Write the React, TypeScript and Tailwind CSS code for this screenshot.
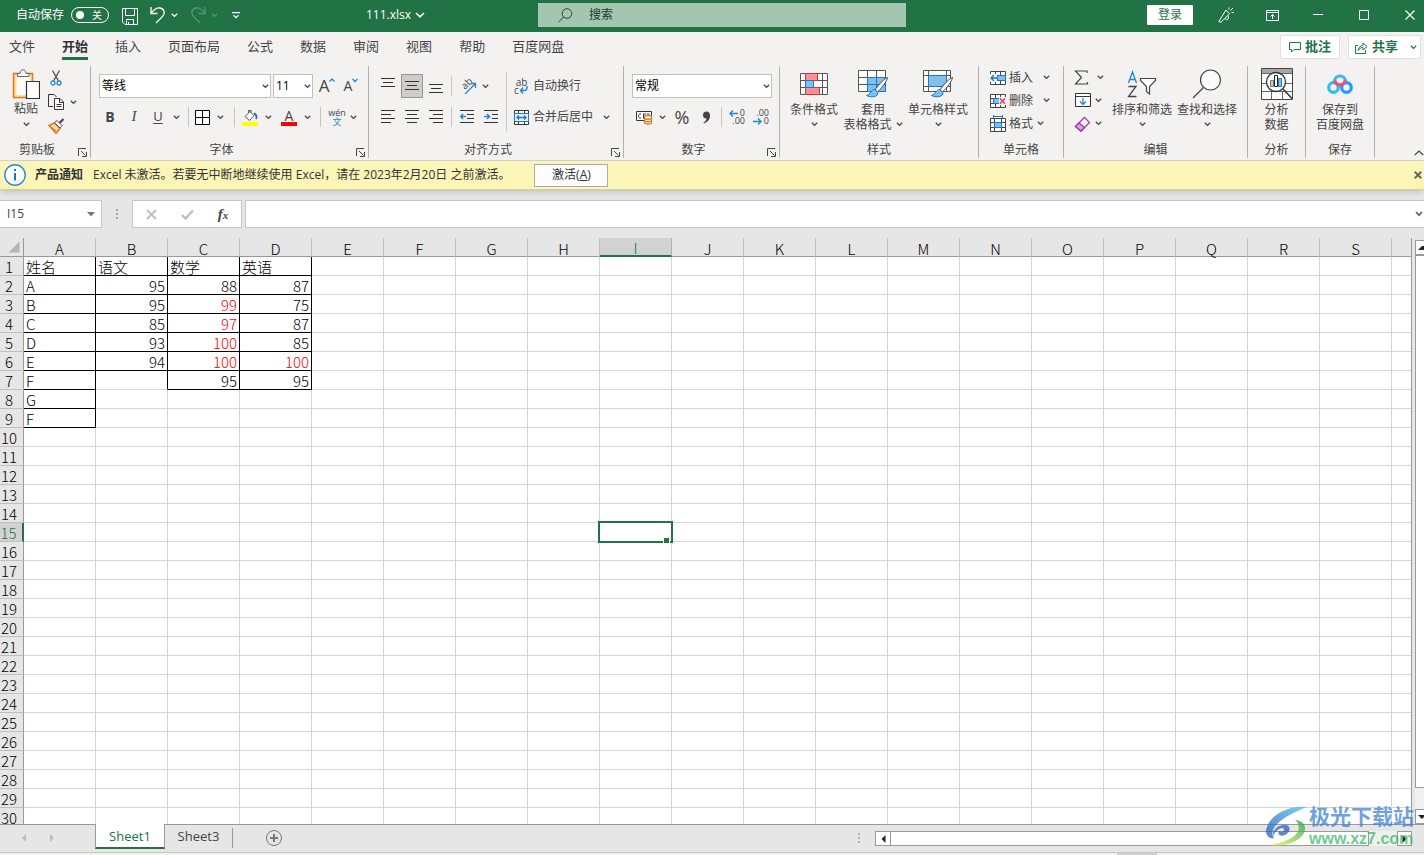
import type { ReactNode } from "react";

const COLUMNS = "ABCDEFGHIJKLMNOPQRS".split("");
const ROW_COUNT = 30;
const SELECTED = { column: "I", row: 15 };

const RIBBON_TABS = ["文件", "开始", "插入", "页面布局", "公式", "数据", "审阅", "视图", "帮助", "百度网盘"];

type Cell = { value?: string; red?: boolean };

const SHEET: Record<number, Record<string, Cell>> = {
  1: { A: { value: "姓名" }, B: { value: "语文" }, C: { value: "数学" }, D: { value: "英语" } },
  2: { A: { value: "A" }, B: { value: "95" }, C: { value: "88" }, D: { value: "87" } },
  3: { A: { value: "B" }, B: { value: "95" }, C: { value: "99", red: true }, D: { value: "75" } },
  4: { A: { value: "C" }, B: { value: "85" }, C: { value: "97", red: true }, D: { value: "87" } },
  5: { A: { value: "D" }, B: { value: "93" }, C: { value: "100", red: true }, D: { value: "85" } },
  6: { A: { value: "E" }, B: { value: "94" }, C: { value: "100", red: true }, D: { value: "100", red: true } },
  7: { A: { value: "F" }, C: { value: "95" }, D: { value: "95" } },
  8: { A: { value: "G" } },
  9: { A: { value: "F" } },
};

/* ---------- shared pieces ---------- */

function Svg({ w, h, className = "", children }: { w: number; h: number; className?: string; children: ReactNode }) {
  return (
    <svg width={w} height={h} viewBox={`0 0 ${w} ${h}`} fill="none" stroke="currentColor" className={`shrink-0 ${className}`} aria-hidden="true">
      {children}
    </svg>
  );
}

function Chevron({ className = "" }: { className?: string }) {
  return (
    <Svg w={7} h={5} className={className}>
      <path d="M0.8 0.8 3.5 3.4 6.2 0.8" strokeWidth="1.3" />
    </Svg>
  );
}

function ChevronButton({ label }: { label: string }) {
  return (
    <button aria-label={label} className="flex h-6 w-3 shrink-0 items-center justify-center">
      <Chevron />
    </button>
  );
}

function IconButton({ label, className = "w-6", children }: { label: string; className?: string; children: ReactNode }) {
  return (
    <button aria-label={label} className={`flex h-6 shrink-0 items-center justify-center ${className}`}>
      {children}
    </button>
  );
}

function Divider({ className = "h-5" }: { className?: string }) {
  return <div className={`w-px shrink-0 bg-[#c8c6c4] ${className}`} />;
}

function Picker({ label, value, className }: { label: string; value: string; className: string }) {
  return (
    <div className={`relative shrink-0 ${className}`}>
      <select aria-label={label} defaultValue={value} className="h-6 w-full appearance-none border border-[#c3c1bf] bg-white pl-0.5 text-xs text-black">
        <option>{value}</option>
      </select>
      <Chevron className="pointer-events-none absolute top-2.5 right-0.5" />
    </div>
  );
}

function Group({ label, className, launcher, children }: { label: string; className: string; launcher?: boolean; children: ReactNode }) {
  return (
    <section aria-label={label} className={`flex h-[92px] shrink-0 flex-col border-r border-[#b3b0ad] ${className}`}>
      <div className="flex-1">{children}</div>
      <div className="flex h-4 items-center">
        <span className="flex-1 text-center text-xs leading-4">{label}</span>
        {launcher && (
          <button aria-label={`${label}设置`} className="flex w-4 justify-end pt-1 pr-[3px]">
            <Svg w={9} h={9}>
              <path d="M0.5 8V0.5H8M3 3l4.5 4.5M8.5 4v4.5H4" />
            </Svg>
          </button>
        )}
      </div>
    </section>
  );
}

function BigButton({ icon, lines, chevron, className }: { icon: ReactNode; lines: string[]; chevron?: boolean; className: string }) {
  return (
    <button className={`flex shrink-0 flex-col items-center text-xs leading-[15px] ${className}`}>
      <span className="mb-0.5 flex h-8 items-center justify-center">{icon}</span>
      <span className="whitespace-nowrap">{lines[0]}</span>
      <span className="flex h-[15px] items-center gap-1 whitespace-nowrap">
        {lines[1]}
        {chevron && <Chevron />}
      </span>
    </button>
  );
}

function AlignIcon({ lines }: { lines: [number, number, number][] }) {
  return (
    <Svg w={14} h={16}>
      {lines.map(([x, y, w]) => (
        <path key={y} d={`M${x} ${y + 0.5}h${w}`} stroke="#333" />
      ))}
    </Svg>
  );
}

/* ---------- title bar ---------- */

function TitleBar() {
  return (
    <header className="grid h-8 shrink-0 grid-cols-[538fr_368fr_518fr] bg-[#217346] text-xs text-white">
      <div className="flex items-center pr-[113px] pb-0.5 pl-4">
        <label className="flex items-center gap-[7px]">
          自动保存
          <input type="checkbox" className="sr-only" />
          <span className="flex h-4 w-[38px] items-center justify-between rounded-full border border-white pr-1.5 pl-1">
            <span className="size-2 rounded-full bg-white" />
            <span className="text-[10px] leading-3">关</span>
          </span>
        </label>
        <IconButton label="保存" className="mt-0.5 ml-[11px] w-5">
          <Svg w={16} h={17}>
            <path d="M0.5 0.5H15.5V16.5H3L0.5 14V0.5ZM3.5 0.5V7.5H12.5V0.5M4.5 16.5V11.5H11.5V16.5M6.5 14v2" />
          </Svg>
        </IconButton>
        <IconButton label="撤消" className="ml-2 w-5">
          <Svg w={16} h={18}>
            <path d="M1 1V7.5H7.5M1.2 7.2C4 3.5 7 1.5 10 2 14.5 2.8 15.5 7.5 12.5 10.5L6 17" strokeWidth="1.3" />
          </Svg>
        </IconButton>
        <ChevronButton label="撤消列表" />
        <IconButton label="恢复" className="ml-2 w-5 text-[#559674]">
          <Svg w={16} h={18}>
            <path d="M15 1V7.5H8.5M14.8 7.2C12 3.5 9 1.5 6 2 1.5 2.8 0.5 7.5 3.5 10.5L10 17" strokeWidth="1.3" />
          </Svg>
        </IconButton>
        <span className="text-[#559674]">
          <ChevronButton label="恢复列表" />
        </span>
        <IconButton label="自定义快速访问工具栏" className="ml-1.5 w-5">
          <Svg w={8} h={7}>
            <path d="M0 0.7H8M1.5 3.2 4 5.7 6.5 3.2" strokeWidth="1.3" />
          </Svg>
        </IconButton>
        <button className="ml-auto flex items-center gap-1">
          <span>111.xlsx</span>
          <Svg w={10} h={6}>
            <path d="M1 1 5 4.8 9 1" strokeWidth="1.6" />
          </Svg>
        </button>
      </div>
      <label className="mt-[3px] flex h-6 items-center gap-4 bg-[#a3c6b1] pl-5 text-[#1e4e33]">
        <Svg w={15} h={15}>
          <circle cx="9" cy="5.5" r="4.8" />
          <path d="M5.5 9 0.5 14.2" />
        </Svg>
        <input aria-label="搜索" placeholder="搜索" className="w-full bg-transparent text-xs outline-none placeholder:text-[#173d28]" />
      </label>
      <div className="flex items-center justify-end pb-0.5">
        <button className="mr-[25px] h-5 w-[46px] rounded-[1px] bg-white text-xs text-[#217346]">登录</button>
        <IconButton label="即将推出的功能" className="w-4">
          <Svg w={16} h={16}>
            <path d="M0.8 14.5 8 3 11.5 6.8 3 15.2 0.8 14.5ZM7 11.5 8.5 13 10.5 11.5 10 8.5M11 2.5V0.5M12.5 3.5 15 1M13.5 5.5H15.8" />
          </Svg>
        </IconButton>
        <IconButton label="功能区显示选项" className="ml-[30px] w-4">
          <Svg w={13} h={11}>
            <path d="M0.5 0.5H12.5V10.5H0.5ZM0.5 2.5H12.5M6.5 9V4.5M4.5 6.5 6.5 4.5 8.5 6.5" />
          </Svg>
        </IconButton>
        <IconButton label="最小化" className="ml-[30px] w-4">
          <Svg w={10} h={10}>
            <path d="M0 4.5H10" />
          </Svg>
        </IconButton>
        <IconButton label="最大化" className="ml-[30px] w-4">
          <Svg w={10} h={10}>
            <path d="M0.5 0.5H9.5V9.5H0.5Z" />
          </Svg>
        </IconButton>
        <IconButton label="关闭" className="mr-1.5 ml-[30px] w-4">
          <Svg w={10} h={10}>
            <path d="M0.5 0.5 9.5 9.5M9.5 0.5 0.5 9.5" strokeWidth="1.2" />
          </Svg>
        </IconButton>
      </div>
    </header>
  );
}

function TabBar() {
  return (
    <nav className="flex h-[30px] shrink-0 items-center bg-[#f3f2f1] pr-[3px] pl-[9px]">
      <div className="flex flex-1 gap-[27px]">
        {RIBBON_TABS.map((tab) => (
          <button
            key={tab}
            className={`h-[26px] border-b-[3px] text-[13px] leading-5 whitespace-nowrap ${
              tab === "开始" ? "border-[#217346] font-bold text-[#333]" : "border-transparent"
            }`}
          >
            {tab}
          </button>
        ))}
      </div>
      <button className="mr-2 flex h-6 w-[60px] items-center justify-center gap-1 rounded-xs border border-[#e1dfdd] bg-white text-[13px] font-bold text-[#217346]">
        <Svg w={12} h={11}>
          <path d="M0.5 0.5H11.5V7.5H5L2.5 10V7.5H0.5Z" />
        </Svg>
        批注
      </button>
      <button className="flex h-6 w-[73px] items-center gap-1 rounded-xs border border-[#e1dfdd] bg-white pl-1.5 text-[13px] font-bold text-[#217346]">
        <Svg w={13} h={13}>
          <path d="M3 4.5H0.5V12.5H10.5V9M3 9.5C3.5 6 6 4.5 8 4.5V2L12 5.5 8 9V6.5C6 6.5 4.5 7.5 3 9.5Z" />
        </Svg>
        共享
        <Chevron className="ml-2" />
      </button>
    </nav>
  );
}

/* ---------- ribbon icons ---------- */

function PasteIcon() {
  return (
    <Svg w={28} h={31}>
      <path d="M1.5 4.5H20.5V28.5H1.5Z" fill="#fbdf9b" stroke="#e0771c" strokeWidth="1.5" />
      <path d="M4.5 6.5H18V26H4.5Z" fill="#fcfcfc" stroke="none" />
      <path d="M5.5 7.5V4.5H8C8 2 9.5 0.8 11 0.8S14 2 14 4.5H17V7.5Z" fill="#fff" stroke="#666" />
      <path d="M14.5 12.5H27.5V29.5H14.5Z" fill="#fff" stroke="#333" strokeWidth="1.2" />
    </Svg>
  );
}

function CutIcon() {
  return (
    <Svg w={12} h={16}>
      <path d="M2.5 0.5 8.5 11M9.5 0.5 3.5 11" stroke="#444" strokeWidth="1.2" />
      <circle cx="3" cy="13" r="2" stroke="#2a8dd4" strokeWidth="1.3" />
      <circle cx="9" cy="13" r="2" stroke="#2a8dd4" strokeWidth="1.3" />
    </Svg>
  );
}

function CopyIcon() {
  return (
    <Svg w={16} h={17}>
      <path d="M5 12.5H0.5V0.5H6L8.5 3" stroke="#333" />
      <path d="M6.5 4.5H12L15.5 8V15.5H6.5ZM11.5 4.5V8.5H15.5M8.5 10.5H13.5M8.5 12.5H13.5" fill="#fff" stroke="#333" />
    </Svg>
  );
}

function BrushIcon() {
  return (
    <Svg w={17} h={16}>
      <path d="M1 7.5 6.5 5 12 10.5 8 15.2Z" fill="#fbd9a8" stroke="#e0771c" strokeWidth="1.5" />
      <path d="M3 9.5 8 13" stroke="#e0771c" strokeWidth="1.3" />
      <path d="M6.5 4.5 9 2.5 14 7.5 12 10Z" fill="#fff" stroke="#555" />
      <path d="M11.5 5 15.5 1" stroke="#444" strokeWidth="2.2" />
    </Svg>
  );
}

function TableGlyph() {
  return (
    <path d="M0.5 0.5H27.5V21.5H0.5ZM0.5 7.5H27.5M0.5 14.5H27.5M9.5 0.5V21.5M18.5 0.5V21.5" fill="#fff" stroke="#555" />
  );
}

function StyleBrush() {
  return (
    <>
      <path d="M29.5 7.5C27 8 20 15 17 20L19.5 22C24 18 29 11 29.5 7.5Z" fill="#fff" stroke="#444" />
      <path d="M16.5 19.5C13 19.5 13 24 8.5 25.5 13 28 20.5 27 20 22.5Z" fill="#83beec" stroke="#1979ca" />
    </>
  );
}

function ConditionalIcon() {
  return (
    <Svg w={28} h={24}>
      <path d="M0.5 1.5H27.5V22.5H0.5ZM0.5 8.5H27.5M0.5 15.5H27.5M5.5 1.5V22.5M22.5 1.5V22.5" fill="#fff" stroke="#555" />
      <path d="M5.5 1.5H17.5V8.5H5.5ZM5.5 15.5H19.5V22.5H5.5Z" fill="#ff8f95" stroke="#d6343c" />
      <path d="M5.5 8.5H13.5V15.5H5.5Z" fill="#83beec" stroke="#1979ca" />
    </Svg>
  );
}

function TableStyleIcon() {
  return (
    <Svg w={30} h={28}>
      <TableGlyph />
      <path d="M9.5 7.5H27.5V21.5H9.5ZM9.5 14.5H27.5M18.5 7.5V21.5" fill="#83beec" stroke="#1979ca" />
      <StyleBrush />
    </Svg>
  );
}

function CellStyleIcon() {
  return (
    <Svg w={30} h={28}>
      <path d="M0.5 0.5H27.5V21.5H0.5ZM0.5 5.5H27.5M0.5 16.5H27.5M5.5 0.5V21.5M23.5 0.5V21.5" fill="#fff" stroke="#555" />
      <path d="M5.5 5.5H23.5V16.5H5.5Z" fill="#83beec" stroke="#1979ca" />
      <StyleBrush />
    </Svg>
  );
}

function SmallGrid() {
  return <path d="M0.5 0.5H15.5V13.5H0.5ZM0.5 4.5H15.5M0.5 9.5H15.5M5.5 0.5V13.5M10.5 0.5V13.5" fill="#fff" stroke="#444" />;
}

function InsertCellIcon() {
  return (
    <Svg w={16} h={14}>
      <SmallGrid />
      <path d="M7.5 4.5H15.5V9.5H7.5Z" fill="#83beec" stroke="#1979ca" />
      <path d="M0 3H7V11H0Z" fill="#f3f2f1" stroke="none" />
      <path d="M8 7H1M4 4 1 7 4 10" stroke="#1979ca" strokeWidth="1.3" />
    </Svg>
  );
}

function DeleteCellIcon() {
  return (
    <Svg w={16} h={14}>
      <SmallGrid />
      <path d="M3.5 4.5H9.5V9.5H3.5Z" fill="#83beec" stroke="#1979ca" />
      <path d="M9 3H16V11H9Z" fill="#f3f2f1" stroke="none" />
      <path d="M10 4.500 15 9.800M15 4.500 10 9.800" stroke="#e8404a" strokeWidth="1.5" />
    </Svg>
  );
}

function FormatCellIcon() {
  return (
    <Svg w={16} h={17}>
      <path d="M0.5 3.5H15.5V16.5H0.5ZM0.5 7.5H15.5M0.5 12.5H15.5M4.5 3.5V16.5M11.5 3.5V16.5" fill="#fff" stroke="#444" />
      <path d="M4.5 7.5H11.5V12.5H4.5Z" fill="#83beec" stroke="#1979ca" />
      <path d="M3.5 1.5H12.5M3.5 0V3M12.5 0V3" stroke="#1979ca" />
    </Svg>
  );
}

function SortFilterIcon() {
  return (
    <Svg w={30} h={28}>
      <path d="M1.5 13 5.5 2 9.5 13M3 9.5H8" stroke="#1f88d2" strokeWidth="1.3" />
      <path d="M1.5 16.5H9L1.5 26.5H9.5" stroke="#444" strokeWidth="1.3" />
      <path d="M13.5 8.5H28.5V10.5L22.5 16.5V24L19.5 21.5V16.5L13.5 10.5Z" fill="#fff" stroke="#444" strokeWidth="1.2" />
    </Svg>
  );
}

function FindIcon() {
  return (
    <Svg w={30} h={30}>
      <circle cx="18.5" cy="11" r="10" fill="#fafafa" stroke="#444" strokeWidth="1.2" />
      <path d="M11.5 18.5 1 29" stroke="#444" strokeWidth="1.3" />
    </Svg>
  );
}

function AnalyzeIcon() {
  return (
    <Svg w={32} h={32}>
      <path d="M0.5 0.5H31.5V31.5H0.5Z" fill="#fff" stroke="#444" />
      <path d="M1 1H31V5H1Z" fill="#a8a6a4" stroke="none" />
      <path d="M1 5.5H31M1 15.5H31M1 23.5H31M10.5 23.5V31M21.5 23.5V31" stroke="#666" />
      <circle cx="15" cy="14" r="9.5" fill="#fff" stroke="#333" strokeWidth="1.3" />
      <path d="M22 21 31 30.5" stroke="#333" strokeWidth="1.5" />
      <path d="M9.5 12.5H12.5V18.5H9.5Z" fill="#c8c6c4" stroke="#777" />
      <path d="M13.5 7.5H16.5V18.5H13.5Z" fill="#fff" stroke="#222" />
      <path d="M17.5 10.5H20.5V18.5H17.5Z" fill="#83beec" stroke="#1979ca" />
    </Svg>
  );
}

function NetdiskIcon() {
  return (
    <Svg w={26} h={20}>
      <circle cx="6.5" cy="13.5" r="4.8" stroke="#2fb9f6" strokeWidth="3.2" />
      <circle cx="19.5" cy="13.5" r="4.8" stroke="#1c9cff" strokeWidth="3.2" />
      <path d="M7.5 7.5A5.5 5.5 0 0 1 18.5 7.5" stroke="#3cb4f8" strokeWidth="3.2" />
      <path d="M7.8 6.5A5.3 5.3 0 0 0 18.2 6.5" stroke="#f2506a" strokeWidth="3.2" />
    </Svg>
  );
}

/* ---------- ribbon groups ---------- */

function ClipboardGroup() {
  return (
    <Group label="剪贴板" className="w-[91px]" launcher>
      <div className="flex pl-2.5">
        <button className="flex w-8 flex-col items-center pt-[3px] text-xs">
          <PasteIcon />
          <span className="text-xs leading-[18px] whitespace-nowrap">粘贴</span>
          <Chevron className="mt-1" />
        </button>
        <div className="flex flex-col pl-1.5">
          <IconButton label="剪切" className="w-4">
            <CutIcon />
          </IconButton>
          <div className="flex items-center">
            <IconButton label="复制" className="w-4">
              <CopyIcon />
            </IconButton>
            <span className="ml-[3px]">
              <ChevronButton label="复制选项" />
            </span>
          </div>
          <IconButton label="格式刷" className="w-4">
            <BrushIcon />
          </IconButton>
        </div>
      </div>
    </Group>
  );
}

function FontGroup() {
  return (
    <Group label="字体" className="w-[278px]" launcher>
      <div className="flex flex-col gap-[7px] pt-2">
        <div className="flex items-center pl-2">
          <Picker label="字体" value="等线" className="mr-0.5 w-[172px]" />
          <Picker label="字号" value="11" className="mr-0.5 w-10" />
          <IconButton label="增大字号">
            <span className="text-[17px]">A</span>
            <Svg w={6} h={18}>
              <path d="M0.5 4.5 3 2 5.5 4.5" stroke="#1f88d2" strokeWidth="1.3" />
            </Svg>
          </IconButton>
          <IconButton label="减小字号">
            <span className="text-sm">A</span>
            <Svg w={6} h={18}>
              <path d="M0.5 2 3 4.5 5.5 2" stroke="#1f88d2" strokeWidth="1.3" />
            </Svg>
          </IconButton>
        </div>
        <div className="flex items-center pl-[7px]">
          <IconButton label="加粗">
            <b className="text-sm">B</b>
          </IconButton>
          <IconButton label="倾斜">
            <i className="font-['Liberation_Serif',serif] text-[15px]">I</i>
          </IconButton>
          <IconButton label="下划线">
            <u className="text-[13px] underline-offset-2">U</u>
          </IconButton>
          <ChevronButton label="下划线样式" />
          <Divider className="mx-1.5 h-5" />
          <IconButton label="边框" className="mr-1 w-[15px]">
            <Svg w={15} h={15}>
              <path d="M0.5 0.5H14.5V14.5H0.5ZM7.5 0.5V14.5M0.5 7.5H14.5" fill="#fff" stroke="#000" />
            </Svg>
          </IconButton>
          <ChevronButton label="边框样式" />
          <Divider className="mr-[7px] ml-2 h-5" />
          <IconButton label="填充颜色" className="mr-1 w-4">
            <Svg w={16} h={17}>
              <path d="M3 7.5 8 2.5 12 6.5 7.5 11.5ZM6.5 4V1.5H9V3.5" fill="#fff" stroke="#555" />
              <path d="M12 4.5C14.5 5 15 8 14 10" stroke="#1f6fb0" strokeWidth="1.8" />
              <path d="M0 13H16V17H0Z" fill="#ff0" stroke="none" />
            </Svg>
          </IconButton>
          <ChevronButton label="填充颜色列表" />
          <IconButton label="字体颜色" className="mr-1 ml-[7px] w-4 flex-col">
            <span className="text-sm leading-[13px]">A</span>
            <span className="h-1 w-4 bg-[#f00]" />
          </IconButton>
          <ChevronButton label="字体颜色列表" />
          <Divider className="mr-1.5 ml-[7px] h-5" />
          <IconButton label="拼音指南" className="w-5 flex-col">
            <span className="text-[9px] leading-[9px]">wén</span>
            <span className="text-[9px] leading-[9px] text-[#1f88d2]">文</span>
          </IconButton>
          <ChevronButton label="拼音选项" />
        </div>
      </div>
    </Group>
  );
}

function AlignmentGroup() {
  return (
    <Group label="对齐方式" className="w-[255px]" launcher>
      <div className="flex pl-[7px]">
        <div className="flex flex-col gap-[7px] pt-2">
          <div className="flex items-center">
            <IconButton label="顶端对齐">
              <AlignIcon lines={[[0, 0, 14], [2, 4, 10], [0, 8, 14]]} />
            </IconButton>
            <button aria-label="垂直居中" aria-pressed="true" className="mx-px flex h-6 w-[22px] items-center justify-center border border-[#979593] bg-[#cfcdcb]">
              <AlignIcon lines={[[0, 3, 14], [2, 7, 10], [0, 11, 14]]} />
            </button>
            <IconButton label="底端对齐">
              <AlignIcon lines={[[0, 6, 14], [2, 10, 10], [0, 14, 14]]} />
            </IconButton>
            <Divider className="mx-[3px] h-5" />
            <IconButton label="方向">
              <Svg w={19} h={17} className="overflow-visible">
                <text fontSize="10" fill="#444" stroke="none" transform="translate(7 12) rotate(-45)">ab</text>
                <path d="M7 16 17.500 5.500M13 5.500H17.500V10" stroke="#1f88d2" strokeWidth="1.3" />
              </Svg>
            </IconButton>
            <ChevronButton label="方向选项" />
          </div>
          <div className="flex items-center">
            <IconButton label="左对齐">
              <AlignIcon lines={[[0, 1, 14], [0, 5, 10], [0, 9, 14], [0, 13, 10]]} />
            </IconButton>
            <IconButton label="居中">
              <AlignIcon lines={[[0, 1, 14], [2, 5, 10], [0, 9, 14], [2, 13, 10]]} />
            </IconButton>
            <IconButton label="右对齐">
              <AlignIcon lines={[[0, 1, 14], [4, 5, 10], [0, 9, 14], [4, 13, 10]]} />
            </IconButton>
            <Divider className="mx-[3px] h-5" />
            <IconButton label="减少缩进量">
              <Svg w={14} h={16}>
                <path d="M0 1.5H14M7 5.5H14M7 9.5H14M0 13.5H14" stroke="#333" />
                <path d="M6 7.5H1M3 5 0.8 7.5 3 10" stroke="#1f88d2" strokeWidth="1.5" />
              </Svg>
            </IconButton>
            <IconButton label="增加缩进量">
              <Svg w={14} h={16}>
                <path d="M0 1.5H14M8 5.5H14M8 9.5H14M0 13.5H14" stroke="#333" />
                <path d="M0 7.5H5.5M3 5 5.5 7.5 3 10" stroke="#1f88d2" strokeWidth="1.5" />
              </Svg>
            </IconButton>
          </div>
        </div>
        <Divider className="mt-1.5 ml-[3px] h-[59px]" />
        <div className="flex flex-col gap-[7px] pt-2 pl-[7px]">
          <button className="flex h-6 items-center gap-1 text-xs">
            <span className="flex w-[15px] flex-col text-[10px] leading-2">
              <span>ab</span>
              <span className="flex items-center">
                c
                <Svg w={9} h={8}>
                  <path d="M8 0V1.5C8 3.5 7 4.500 5 4.500H1.500M4 1.500 1.500 4.500 4 7.500" stroke="#1f88d2" strokeWidth="1.4" />
                </Svg>
              </span>
            </span>
            自动换行
          </button>
          <div className="flex items-center">
            <button className="flex h-6 items-center gap-1 text-xs">
              <Svg w={15} h={15}>
                <path d="M0.5 0.5H14.5V14.5H0.5ZM4.5 0.5V4M10.5 0.5V4M4.5 11V14.5M10.5 11V14.5" fill="#fff" stroke="#333" />
                <path d="M0.5 3.5H14.5V11.5H0.5Z" fill="#e5f2fb" stroke="#1979ca" />
                <path d="M3 7.5H12M5 5.5 3 7.5 5 9.5M10 5.5 12 7.5 10 9.5" stroke="#1979ca" strokeWidth="1.3" />
              </Svg>
              合并后居中
            </button>
            <span className="ml-[7px]">
              <ChevronButton label="合并选项" />
            </span>
          </div>
        </div>
      </div>
    </Group>
  );
}

function NumberGroup() {
  return (
    <Group label="数字" className="w-[156px]" launcher>
      <div className="flex flex-col gap-[7px] pt-2 pl-2">
        <Picker label="数字格式" value="常规" className="w-[140px]" />
        <div className="flex items-center">
          <IconButton label="会计数字格式">
            <Svg w={17} h={15}>
              <path d="M0.5 1.5H15.5V10.5H0.5Z" fill="#fff" stroke="#333" />
              <path d="M5 4C3 3.5 2.5 5 2.5 6S3 8.5 5 8M7.5 8.5V4H10M11 4H13.5" stroke="#333" />
              <path d="M8.5 6.5C8.5 5 15.5 5 15.5 6.5V12.5C15.5 14.5 8.5 14.5 8.5 12.5Z" fill="#fff" stroke="#e0771c" strokeWidth="1.3" />
              <path d="M8.5 8.5C10 9.5 14 9.5 15.5 8.5M8.5 11C10 12 14 12 15.5 11" stroke="#e0771c" strokeWidth="1.3" />
            </Svg>
          </IconButton>
          <ChevronButton label="会计格式选项" />
          <IconButton label="百分比样式" className="ml-0.5 w-6">
            <span className="text-lg">%</span>
          </IconButton>
          <IconButton label="千位分隔样式">
            <Svg w={9} h={13}>
              <path d="M4.5 0.5A3.5 3.5 0 1 0 4.5 7.5C4.5 9 3.5 10.5 1.5 11.5L2 12.5C6 11 8.2 8 8 4.5 8 2 6.5 0.5 4.5 0.5Z" fill="#444" stroke="none" />
            </Svg>
          </IconButton>
          <Divider className="mx-[3px] h-5" />
          <IconButton label="增加小数位数">
            <span className="flex w-4 flex-col text-[9px] leading-2">
              <span className="flex items-center justify-between">
                <Svg w={9} h={7}>
                  <path d="M9 3.5H1M4 0.5 1 3.5 4 6.5" stroke="#1f88d2" strokeWidth="1.4" />
                </Svg>
                0
              </span>
              <span className="text-right">.00</span>
            </span>
          </IconButton>
          <IconButton label="减少小数位数">
            <span className="flex w-4 flex-col text-[9px] leading-2">
              <span className="text-right">.00</span>
              <span className="flex items-center justify-between">
                <Svg w={9} h={7}>
                  <path d="M0 3.5H8M5 0.5 8 3.5 5 6.5" stroke="#1f88d2" strokeWidth="1.4" />
                </Svg>
                0
              </span>
            </span>
          </IconButton>
        </div>
      </div>
    </Group>
  );
}

function CellsGroup() {
  const items = [
    { label: "插入", icon: <InsertCellIcon />, gap: "gap-2.5" },
    { label: "删除", icon: <DeleteCellIcon />, gap: "gap-2.5" },
    { label: "格式", icon: <FormatCellIcon />, gap: "gap-1" },
  ];
  return (
    <Group label="单元格" className="w-[85px]">
      <div className="flex flex-col pl-[11px]">
        {items.map((item) => (
          <button key={item.label} className={`flex h-[23px] items-center text-xs ${item.gap}`}>
            <span className="flex items-center gap-[3px] whitespace-nowrap">
              {item.icon}
              {item.label}
            </span>
            <Chevron />
          </button>
        ))}
      </div>
    </Group>
  );
}

function EditingGroup() {
  return (
    <Group label="编辑" className="w-[184px]">
      <div className="flex pl-2.5">
        <div className="flex flex-col">
          <button aria-label="自动求和" className="flex h-[23px] items-center gap-2">
            <Svg w={15} h={15}>
              <path d="M13 3V1H1.5L7.5 7.5 1.5 14H13.5V12" stroke="#444" strokeWidth="1.2" />
            </Svg>
            <Chevron />
          </button>
          <button aria-label="填充" className="flex h-[23px] items-center gap-1">
            <Svg w={17} h={15}>
              <path d="M1.5 0.5H16.5V13.5H1.5ZM1.5 3.5H16.5" fill="#fff" stroke="#333" />
              <path d="M9 5V11.5M6 8.5 9 11.5 12 8.5" stroke="#1f88d2" strokeWidth="1.3" />
            </Svg>
            <Chevron />
          </button>
          <button aria-label="清除" className="flex h-[23px] items-center gap-1">
            <Svg w={17} h={16}>
              <path d="M1.5 10.5 10.5 1.5 15.5 6.5 7 15Z" fill="#fff" stroke="#a33cae" strokeWidth="1.3" />
              <path d="M1.5 10.5 5 7 10.5 11.5 7 15Z" fill="#d9a4de" stroke="#a33cae" strokeWidth="1.3" />
            </Svg>
            <Chevron />
          </button>
        </div>
        <div className="flex pt-0.5 pl-[5px]">
          <BigButton icon={<SortFilterIcon />} lines={["排序和筛选"]} chevron className="w-[66px]" />
          <BigButton icon={<FindIcon />} lines={["查找和选择"]} chevron className="w-16" />
        </div>
      </div>
    </Group>
  );
}

function Ribbon() {
  return (
    <div className="flex h-[99px] shrink-0 border-b border-[#d2d0ce] bg-[#f3f2f1] pt-1">
      <ClipboardGroup />
      <FontGroup />
      <AlignmentGroup />
      <NumberGroup />
      <Group label="样式" className="w-[199px]">
        <div className="flex pt-0.5 pl-1">
          <BigButton icon={<ConditionalIcon />} lines={["条件格式"]} chevron className="w-[60px]" />
          <BigButton icon={<TableStyleIcon />} lines={["套用", "表格格式"]} chevron className="w-[58px]" />
          <BigButton icon={<CellStyleIcon />} lines={["单元格样式"]} chevron className="w-[72px]" />
        </div>
      </Group>
      <CellsGroup />
      <EditingGroup />
      <Group label="分析" className="w-[58px]">
        <div className="flex justify-center pt-0.5">
          <BigButton icon={<AnalyzeIcon />} lines={["分析", "数据"]} className="w-12" />
        </div>
      </Group>
      <Group label="保存" className="w-[69px]">
        <div className="flex justify-center pt-0.5">
          <BigButton icon={<NetdiskIcon />} lines={["保存到", "百度网盘"]} className="w-14" />
        </div>
      </Group>
      <button aria-label="折叠功能区" className="mt-auto ml-auto pb-1">
        <Svg w={10} h={6}>
          <path d="M0.8 5 5 1 9.2 5" strokeWidth="1.2" />
        </Svg>
      </button>
    </div>
  );
}

/* ---------- notice + formula bar ---------- */

function NoticeBar() {
  return (
    <div className="relative flex h-[29px] shrink-0 items-center border-b border-[#d8d38c] bg-[#fcf5b8] pl-1 text-xs text-[#333] shadow-md">
      <Svg w={22} h={22}>
        <circle cx="11" cy="11" r="10.2" fill="#fff" stroke="#2a8dd4" strokeWidth="1.4" />
        <path d="M11 9V16.5M11 5V7" stroke="#1979ca" strokeWidth="2" />
      </Svg>
      <b className="mr-2.5 ml-[9px]">产品通知</b>
      <span className="whitespace-nowrap">Excel 未激活。若要无中断地继续使用 Excel，请在 2023年2月20日 之前激活。</span>
      <button className="ml-6 h-[23px] w-[74px] border border-[#ababab] bg-[#fdfdfd] text-xs">
        激活(<u>A</u>)
      </button>
      <button aria-label="关闭通知" className="mr-0.5 ml-auto">
        <Svg w={8} h={8}>
          <path d="M0.8 0.8 7.2 7.2M7.2 0.8 0.8 7.2" stroke="#666" strokeWidth="2" />
        </Svg>
      </button>
    </div>
  );
}

function FormulaBar() {
  return (
    <div className="flex h-12 shrink-0 items-start bg-[#e6e6e6] pt-2.5 text-[#444]">
      <div className="flex h-7 w-[102px] items-center border border-l-0 border-[#c6c6c6] bg-white pr-1.5">
        <input aria-label="名称框" defaultValue="I15" className="w-full min-w-0 bg-transparent pl-[7px] text-xs outline-none" />
        <Svg w={8} h={5}>
          <path d="M0 0H8L4 4.500Z" fill="#777" stroke="none" />
        </Svg>
      </div>
      <Svg w={30} h={28}>
        <path d="M14 9h2v2h-2zM14 13h2v2h-2zM14 17h2v2h-2z" fill="#a6a6a6" stroke="none" />
      </Svg>
      <div className="mr-[3px] flex h-7 w-[110px] items-center justify-around border border-[#c6c6c6] bg-white">
        <IconButton label="取消">
          <Svg w={11} h={11}>
            <path d="M1 1 10 10M10 1 1 10" stroke="#bdbdbd" strokeWidth="1.8" />
          </Svg>
        </IconButton>
        <IconButton label="输入">
          <Svg w={13} h={11}>
            <path d="M1 6 4.5 9.5 12 1.5" stroke="#bdbdbd" strokeWidth="2.2" />
          </Svg>
        </IconButton>
        <IconButton label="插入函数">
          <i className="font-['Liberation_Serif',serif] text-[15px] leading-4 font-bold">
            f<span className="text-[11px]">x</span>
          </i>
        </IconButton>
      </div>
      <div className="flex h-7 flex-1 items-center border border-r-0 border-[#c6c6c6] bg-white">
        <input aria-label="编辑栏" className="h-full flex-1 bg-transparent px-1 text-xs outline-none" />
        <button aria-label="展开编辑栏" className="mr-px">
          <Svg w={8} h={6}>
            <path d="M1 1 4 4.2 7 1" stroke="#666" strokeWidth="1.8" />
          </Svg>
        </button>
      </div>
    </div>
  );
}

/* ---------- sheet ---------- */

function cellBorder(row: number, column: string) {
  if (SHEET[row]?.[column]) return "border-r-black border-b-black";
  // the empty B7 shares its right edge with C7
  if (row === 7 && column === "B") return "border-r-black border-b-[#d4d4d4]";
  return "border-[#d4d4d4]";
}

function SheetCell({ row, column }: { row: number; column: string }) {
  const cell = SHEET[row]?.[column];
  const selected = row === SELECTED.row && column === SELECTED.column;
  const numeric = !!cell?.value && /^\d+$/.test(cell.value);
  return (
    <td
      className={`relative h-[19px] border-r border-b px-0.5 pt-0.5 pb-0 leading-4 ${cellBorder(row, column)} ${numeric ? "text-right" : "text-left"} ${
        cell?.red ? "text-[#f00]" : "text-black"
      }`}
    >
      {cell?.value}
      {selected && (
        <span className="absolute -inset-0.5 z-10 border-2 border-[#217346]">
          <span className="absolute right-px -bottom-[3px] size-[7px] border border-white bg-[#217346]" />
        </span>
      )}
    </td>
  );
}

function Sheet() {
  return (
    <div className="min-w-0 flex-1 overflow-hidden border-r border-[#999] bg-white">
      <table className="w-full table-fixed border-separate border-spacing-0 font-['Noto_Sans_CJK_SC',sans-serif] text-[15px] font-light text-black">
        <colgroup>
          <col className="w-6" />
          {COLUMNS.map((c) => (
            <col key={c} className="w-[72px]" />
          ))}
          <col />
        </colgroup>
        <thead>
          <tr>
            <th className="h-[19px] border-r border-b border-[#999] bg-[#e6e6e6] p-0">
              <Svg w={12} h={12} className="ml-auto mr-[3px]">
                <path d="M11.5 0.5V11.5H0.5Z" fill="#b4b4b4" stroke="none" />
              </Svg>
            </th>
            {COLUMNS.map((c) => (
              <th
                key={c}
                className={`h-[19px] p-0 pt-0.5 text-[15px] leading-[15px] font-light ${
                  c === SELECTED.column
                    ? "border-r border-b-2 border-r-[#b1b1b1] border-b-[#217346] bg-[#d2d2d2] text-[#217346]"
                    : "border-r border-b border-r-[#bfbfbf] border-b-[#999] bg-[#e6e6e6]"
                }`}
              >
                {c}
              </th>
            ))}
            <th className="border-b border-[#999] bg-[#e6e6e6] p-0" />
          </tr>
        </thead>
        <tbody>
          {Array.from({ length: ROW_COUNT }, (_, i) => i + 1).map((row) => (
            <tr key={row}>
              <th
                className={`h-[19px] border-b p-0 pt-0.5 pr-[5px] leading-4 font-light ${
                  row === SELECTED.row
                    ? "border-r-2 border-r-[#217346] border-b-[#bfbfbf] bg-[#d2d2d2] text-[#217346]"
                    : "border-r border-r-[#999] border-b-[#bfbfbf] bg-[#e6e6e6]"
                }`}
              >
                {row}
              </th>
              {COLUMNS.map((c) => (
                <SheetCell key={c} row={row} column={c} />
              ))}
              <td className="border-b border-[#d4d4d4] p-0" />
            </tr>
          ))}
        </tbody>
      </table>
    </div>
  );
}

function VerticalScroll() {
  return (
    <div className="flex w-3 shrink-0 flex-col bg-[#e6e6e6] pt-0.5 pl-[3px]">
      <button aria-label="向上滚动" className="flex h-[15px] items-center justify-end border border-r-0 border-[#999] bg-white">
        <Svg w={6} h={4}>
          <path d="M0 4 4 0H6V4Z" fill="#222" stroke="none" />
        </Svg>
      </button>
      <div className="flex-1 border border-r-0 border-[#999] bg-white" />
      <div className="h-[21px] bg-[#f0f0f0]" />
      <button aria-label="向下滚动" className="flex h-[15px] items-center justify-end border border-r-0 border-[#999] bg-white">
        <Svg w={6} h={4}>
          <path d="M0 0H6V2L4 4Z" fill="#222" stroke="none" />
        </Svg>
      </button>
    </div>
  );
}

function SheetTabs() {
  return (
    <div className="flex h-7 shrink-0 bg-[#e6e6e6] text-[13px] text-[#444]">
      <div className="flex w-[95px] items-center gap-[22px] border-t border-[#999] pb-0.5 pl-[21px]">
        <button aria-label="上一个工作表">
          <Svg w={6} h={8}>
            <path d="M5 0V8L1 4Z" fill="#bdbdbd" stroke="none" />
          </Svg>
        </button>
        <button aria-label="下一个工作表">
          <Svg w={6} h={8}>
            <path d="M1 0V8L5 4Z" fill="#bdbdbd" stroke="none" />
          </Svg>
        </button>
      </div>
      <button className="h-[25px] w-[70px] border-x border-b-2 border-x-[#999] border-b-[#217346] bg-white pt-px leading-[22px] text-[#217346]">Sheet1</button>
      <div className="flex flex-1 items-start border-t border-[#999]">
        <button className="h-[23px] w-[67px] leading-[23px]">Sheet3</button>
        <div className="mt-[3px] h-5 w-px bg-[#999]" />
        <button aria-label="新工作表" className="mt-1 ml-8">
          <Svg w={18} h={18}>
            <circle cx="9" cy="9" r="7.5" stroke="#777" />
            <path d="M9 5V13M5 9H13" stroke="#777" strokeWidth="2" />
          </Svg>
        </button>
        <Svg w={4} h={27} className="ml-auto">
          <path d="M1 8h2v2h-2zM1 12h2v2h-2zM1 16h2v2h-2z" fill="#b0b0b0" stroke="none" />
        </Svg>
        <div className="mt-1.5 mr-3 ml-3.5 flex w-[537px] bg-[#f0f0f0]">
          <button aria-label="向左滚动" className="flex h-[15px] w-4 items-center justify-center border border-[#999] bg-white">
            <Svg w={5} h={8}>
              <path d="M4.5 0V8L0.5 4Z" fill="#222" stroke="none" />
            </Svg>
          </button>
          <div className="mr-7 h-[15px] flex-1 border border-l-0 border-[#999] bg-white" />
          <button aria-label="向右滚动" className="flex h-[15px] w-[15px] items-center justify-center border border-[#999] bg-white">
            <Svg w={5} h={8}>
              <path d="M0.5 0V8L4.5 4Z" fill="#222" stroke="none" />
            </Svg>
          </button>
        </div>
      </div>
    </div>
  );
}

function Watermark() {
  return (
    <div className="pointer-events-none absolute right-2.5 bottom-1.5 z-20 flex items-center gap-px opacity-75">
      <svg width="43" height="42" viewBox="0 0 43 42" aria-hidden="true">
        <defs>
          <linearGradient id="swirl-blue" x1="0" y1="1" x2="1" y2="0">
            <stop offset="0" stopColor="#1f56b8" />
            <stop offset="1" stopColor="#4fc0f0" />
          </linearGradient>
          <linearGradient id="swirl-green" x1="0" y1="1" x2="1" y2="0">
            <stop offset="0" stopColor="#f0ee4a" />
            <stop offset="0.5" stopColor="#7fcf4a" />
            <stop offset="1" stopColor="#1fa050" />
          </linearGradient>
        </defs>
        <path d="M42 1C20 -1 2 12 1 25 1 30 5 33 9 32 6 29 7 23 12 18 20 10 30 6 42 1Z" fill="url(#swirl-blue)" />
        <path d="M8 31C6 24 14 18 21 19 26 20 26 26 20 29 15 31 12 28 14 25 17 27 20 25 19 23 17 20 10 24 8 31Z" fill="#2a62b8" />
        <path d="M30 14C41 15 43 24 36 31 28 38 16 41 4 39 17 37 28 33 32 27 35 22 34 17 30 14Z" fill="url(#swirl-green)" />
      </svg>
      <div className="flex flex-col font-['Liberation_Sans','Noto_Sans_CJK_SC',sans-serif] leading-none">
        <span className="text-[21px] leading-6 font-bold text-[#3f84d2]">极光下载站</span>
        <span className="text-base leading-5 font-bold text-[#3dba68]">www.xz7.com</span>
      </div>
    </div>
  );
}

export default function App() {
  return (
    <div className="relative flex h-screen flex-col overflow-hidden bg-[#e6e6e6] font-['Open_Sans','Noto_Sans_CJK_SC',sans-serif] text-xs text-[#444]">
      <TitleBar />
      <TabBar />
      <Ribbon />
      <NoticeBar />
      <FormulaBar />
      <main className="flex min-h-0 flex-1">
        <Sheet />
        <VerticalScroll />
      </main>
      <SheetTabs />
      <footer className="flex h-[3px] shrink-0 justify-end border-t border-[#c6c6c6] bg-[#f3f2f1] pr-[267px]">
        <div className="w-10 bg-[#d2d0ce]" />
      </footer>
      <Watermark />
    </div>
  );
}
